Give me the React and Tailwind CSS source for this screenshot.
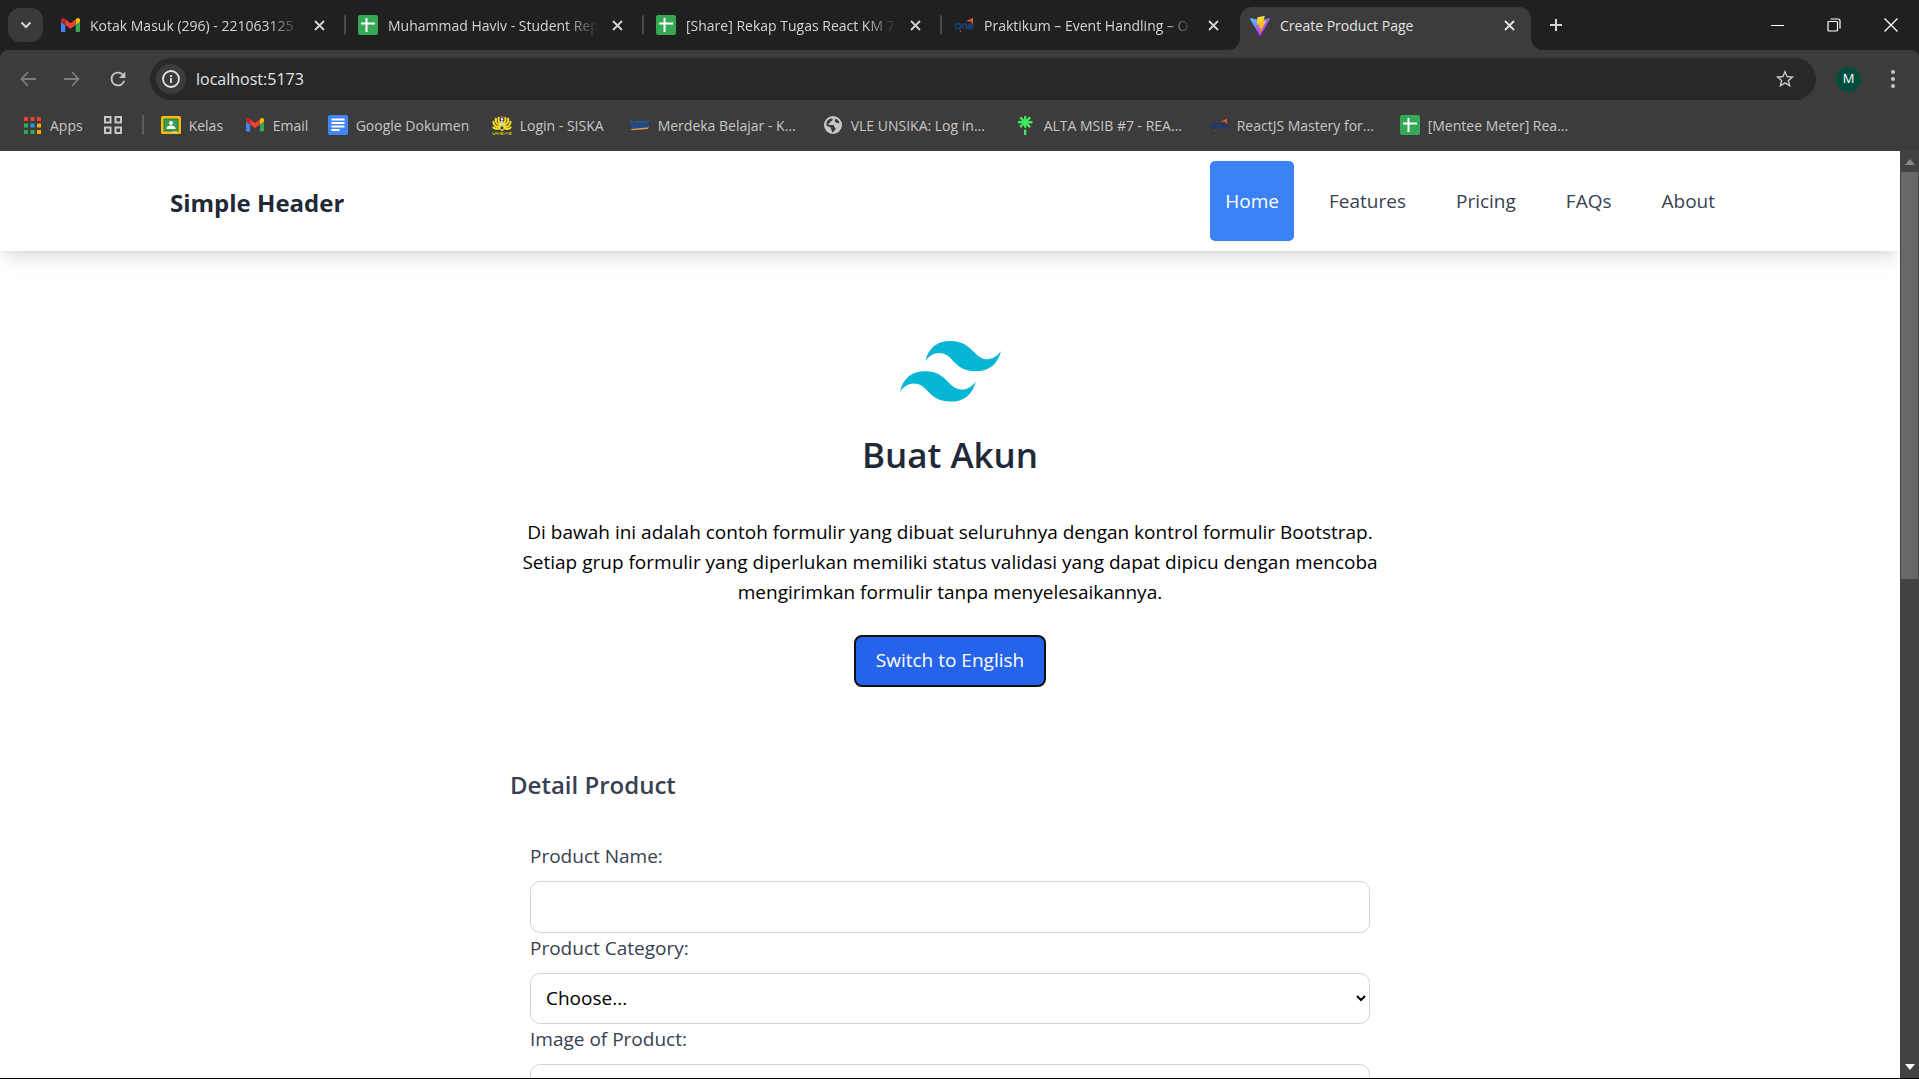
import React from "react";

/* ---------- icons ---------- */

const Gmail = ({ className }) => (
  <svg className={className} viewBox="52 42 88 66" aria-hidden="true">
    <path fill="#4285f4" d="M58 108h14V74L52 59v43c0 3.32 2.69 6 6 6" />
    <path fill="#34a853" d="M120 108h14c3.32 0 6-2.69 6-6V59l-20 15" />
    <path fill="#fbbc04" d="M120 48v26l20-15v-8c0-7.42-8.47-11.65-14.4-7.2" />
    <path fill="#ea4335" d="M72 74V48l24 18 24-18v26L96 92" />
    <path fill="#c5221f" d="M52 51v8l20 15V48l-5.600-4.200c-5.940-4.450-14.400-.22-14.400 7.200" />
  </svg>
);

const Sheets = ({ className }) => (
  <svg className={className} viewBox="0 0 20 20" aria-hidden="true">
    <rect width="20" height="20" rx="2" fill="#34a853" />
    <path d="M8.500 3v14M3 8.500h14" stroke="#fff" strokeWidth="2" />
  </svg>
);

const Docs = ({ className }) => (
  <svg className={className} viewBox="0 0 20 20" aria-hidden="true">
    <rect width="20" height="20" rx="2" fill="#4285f4" />
    <path d="M3.500 4.500h13M3.500 8h13M3.500 11.500h13M3.500 15h8" stroke="#fff" strokeWidth="1.800" />
  </svg>
);

const Classroom = ({ className }) => (
  <svg className={className} viewBox="0 0 20 18" aria-hidden="true">
    <rect width="20" height="18" rx="1.500" fill="#f9bb0c" />
    <rect x="2.500" y="2.500" width="15" height="13" fill="#188038" />
    <rect x="3.500" y="3.500" width="13" height="11" fill="#3f9c52" />
    <circle cx="10" cy="7" r="2" fill="#fff" />
    <path d="M5.500 13c0-2.500 2.500-3.400 4.500-3.400s4.500.9 4.500 3.400z" fill="#fff" />
    <path d="M11 15.500h5v1.200h-5z" fill="#e1e1e1" />
  </svg>
);

const One = ({ className }) => (
  <svg className={className} viewBox="0 0 20 20" aria-hidden="true">
    <g fill="none" stroke="#1c3a6e" strokeWidth="2">
      <circle cx="4" cy="11" r="2.600" />
      <path d="M8.500 14v-5.500M8.500 11c0-3 4-3 4 0v3M14.500 11.200h4.300c0-3-4.400-3-4.400.2 0 2.800 3.200 3 4.400 1.400" />
    </g>
    <path d="M12 6l7-3v6.500l-1.800-2.700z" fill="#f0562b" />
    <circle cx="6.500" cy="16" r=".9" fill="#b0451f" />
  </svg>
);

const Kampus = ({ className }) => (
  <svg className={className} viewBox="0 0 22 14" aria-hidden="true">
    <path
      d="M1 4.500V1.500M1 3l2-1.500M1.500 3l2 1.500M5 4.500V3M7 4.500V2.500l1.500 1 1.500-1v2M12 5V2.500h1.500V4M15.500 2v2h2V2M19.500 3.500V2h2"
      stroke="#1f5da8"
      strokeWidth="1.400"
      fill="none"
    />
    <path d="M1 5.500l20-.5v4L2 10.500z" fill="#1d4e92" />
    <path d="M4 7h2M8 7.500h3M13 6.500h2M17 7h2" stroke="#3c3c3c" strokeWidth="1" />
    <path d="M1 11l20-2-1.500 2L2 12.500z" fill="#e09a52" />
  </svg>
);

const Siska = ({ className }) => (
  <svg className={className} viewBox="0 0 21 21" aria-hidden="true">
    <g stroke="#f5dc1c" strokeWidth="2.200" strokeLinecap="round" fill="none">
      <path d="M8 12C4 12 1.500 9.500 1.500 6.500M8 10C5.500 9.500 3.500 7 4 3.500M8.500 8.500C7 7 6.500 5 7 2.500M13 12c4 0 6.500-2.500 6.500-5.500M13 10c2.500-.5 4.500-3 4-6.500M12.500 8.500C14 7 14.500 5 14 2.500M8 13.500c-3 1-5 .5-6.500-1M13 13.500c3 1 5 .5 6.500-1" />
    </g>
    <path d="M7 9h7l-1 6-2.500 1.500L8 15z" fill="#f5dc1c" />
    <path d="M9.300 1h2.400v4H9.300z" fill="#ececec" />
    <path d="M9.300 1h2.400v1.800H9.300z" fill="#d4322b" />
    <path d="M9.200 5.500h2.600V10H9.200z" fill="#d9cfe8" />
    <circle cx="10.500" cy="13" r="1.600" fill="#1f3a9c" />
    <path
      d="M1 17.500v2.300h2.500v-2.300M5 20v-2.300l2.200 2.300v-2.300M11 17.800H9v1h2V20H9M12.500 17.500V20M14 20l1.300-2.300L16.600 20M18 17.800h2v2.100h-2z"
      stroke="#c9c21e"
      strokeWidth=".9"
      fill="none"
    />
  </svg>
);

const Globe = ({ className }) => (
  <svg className={className} viewBox="0 0 20 20" aria-hidden="true">
    <circle cx="10" cy="10" r="9" fill="#c4c7cc" />
    <path
      d="M8.500 3.500c2 .2 1.500 1.800 0 2.500-1.500.6-1 2-2.500 2.300-1.300.3-.7 1.700.8 1.700h3c1.600 0 1.700 1.500 1.700 2.500 1.500 0 1.500 1.600.5 2.500-1 1-1.500 2.500-3 2.500.5-2-1-2-1-4 0-1.500-2.500-1.500-4.500-3C3 7 5 3.800 8.500 3.500zM12.500 3.500c2 .8 3.500 2.500 4 4.500-1.500.8-3-.5-4.500-1-1-.5.5-2 .5-3.500z"
      fill="#3c3c3c"
    />
  </svg>
);

const Asterisk = ({ className }) => (
  <svg className={className} viewBox="0 0 18 22" aria-hidden="true">
    <path
      d="M9 1v13M1 8h16M3.500 2.600l11 10.800M14.500 2.600l-11 10.800M9 16v6"
      stroke="#43e660"
      strokeWidth="2.600"
      fill="none"
    />
  </svg>
);

const Vite = ({ className }) => (
  <svg className={className} viewBox="0 0 256 257" aria-hidden="true">
    <defs>
      <linearGradient id="viteBody" x1="-.828%" x2="57.636%" y1="7.652%" y2="78.411%">
        <stop offset="0%" stopColor="#41D1FF" />
        <stop offset="100%" stopColor="#BD34FE" />
      </linearGradient>
      <linearGradient id="viteBolt" x1="43.376%" x2="50.316%" y1="2.242%" y2="89.030%">
        <stop offset="0%" stopColor="#FFEA83" />
        <stop offset="8.333%" stopColor="#FFDD35" />
        <stop offset="100%" stopColor="#FFA800" />
      </linearGradient>
    </defs>
    <path
      fill="url(#viteBody)"
      d="M255.153 37.938L134.897 252.976c-2.483 4.440-8.862 4.466-11.382.048L.875 37.958c-2.746-4.814 1.371-10.646 6.827-9.670l120.385 21.517a6.537 6.537 0 0 0 2.322-.004l117.867-21.483c5.438-.991 9.574 4.796 6.877 9.620Z"
    />
    <path
      fill="url(#viteBolt)"
      d="M185.432.063L96.440 17.501a3.268 3.268 0 0 0-2.634 3.014l-5.474 92.456a3.268 3.268 0 0 0 3.997 3.378l24.777-5.718c2.318-.535 4.413 1.507 3.936 3.838l-7.361 36.047c-.495 2.426 1.782 4.500 4.151 3.780l15.304-4.649c2.372-.72 4.652 1.360 4.150 3.788l-11.698 56.621c-.732 3.542 3.979 5.473 5.943 2.437l1.313-2.028l72.516-144.720c1.215-2.423-.88-5.186-3.540-4.672l-25.505 4.922c-2.396.462-4.435-1.770-3.759-4.114l16.646-57.705c.677-2.350-1.370-4.583-3.769-4.113Z"
    />
  </svg>
);

const AppsGrid = ({ className }) => (
  <svg className={className} viewBox="0 0 17 17" aria-hidden="true">
    <path d="M0 0h4v4H0zM6.500 0h4v4h-4zM13 0h4v4h-4z" fill="#ea4335" />
    <path d="M0 6.500h4v4H0zM0 13h4v4H0zM6.500 13h4v4h-4z" fill="#34a853" />
    <path d="M6.500 6.500h4v4h-4z" fill="#2196f3" />
    <path d="M13 6.500h4v4h-4zM13 13h4v4h-4z" fill="#fbaa05" />
  </svg>
);

const TabGroups = ({ className }) => (
  <svg className={className} viewBox="0 0 18 18" aria-hidden="true">
    <path
      d="M1 1h5.500v5.500H1zM11.500 1H17v5.500h-5.500zM1 11.500h5.500V17H1zM11.500 11.500H17V17h-5.500z"
      fill="none"
      stroke="#c7c7c7"
      strokeWidth="2"
    />
  </svg>
);

const Line = ({ className, d, width = 2, box = "0 0 20 20" }) => (
  <svg className={className} viewBox={box} fill="none" stroke="currentColor" strokeWidth={width} aria-hidden="true">
    <path d={d} />
  </svg>
);

const Reload = ({ className }) => (
  <svg className={className} viewBox="0 0 24 24" fill="currentColor" aria-hidden="true">
    <path d="M17.650 6.350A7.958 7.958 0 0 0 12 4a8 8 0 1 0 7.730 10h-2.080A6 6 0 1 1 12 6c1.660 0 3.140.69 4.220 1.780L13 11h7V4z" />
  </svg>
);

const Star = ({ className }) => (
  <svg className={className} viewBox="0 0 24 24" fill="currentColor" aria-hidden="true">
    <path d="M22 9.240l-7.190-.62L12 2 9.190 8.630 2 9.240l5.460 4.730L5.820 21 12 17.270 18.180 21l-1.630-7.030zM12 15.400l-3.760 2.270 1-4.280-3.320-2.880 4.380-.38L12 6.100l1.710 4.040 4.380.38-3.320 2.880 1 4.280z" />
  </svg>
);

const TailwindMark = ({ className }) => (
  <svg className={className} viewBox="0 0 54 33" aria-hidden="true">
    <path
      fill="#06b6d4"
      fillRule="evenodd"
      clipRule="evenodd"
      d="M27 0c-7.200 0-11.700 3.600-13.500 10.800 2.700-3.600 5.850-4.950 9.450-4.050 2.054.513 3.522 2.004 5.147 3.653C30.744 13.090 33.808 16.200 40.500 16.200c7.200 0 11.700-3.600 13.500-10.800-2.700 3.600-5.850 4.950-9.450 4.050-2.054-.513-3.522-2.004-5.147-3.653C36.756 3.110 33.692 0 27 0zM13.500 16.200C6.300 16.200 1.800 19.800 0 27c2.700-3.600 5.850-4.950 9.450-4.050 2.054.514 3.522 2.004 5.147 3.653C17.244 29.290 20.308 32.400 27 32.400c7.200 0 11.700-3.600 13.500-10.800-2.700 3.600-5.850 4.950-9.450 4.050-2.054-.513-3.522-2.004-5.147-3.653C23.256 19.310 20.192 16.200 13.500 16.200z"
    />
  </svg>
);

/* ---------- browser chrome ---------- */

const CROSS = "M1 1l9 9M10 1l-9 9";

const tabs = [
  { title: "Kotak Masuk (296) - 221063125", icon: <Gmail className="w-[19px]" /> },
  { title: "Muhammad Haviv - Student Rep", icon: <Sheets className="size-5" /> },
  { title: "[Share] Rekap Tugas React KM 7", icon: <Sheets className="size-5" /> },
  { title: "Praktikum – Event Handling – O", icon: <One className="size-5" /> },
];

function Tab({ title, icon, last }) {
  return (
    <div className="flex min-w-0 flex-1 items-center">
      <div className="flex min-w-0 flex-1 items-center gap-2.5 pl-3">
        <span className="flex w-5 shrink-0 justify-center">{icon}</span>
        <span className="min-w-0 flex-1 overflow-hidden whitespace-nowrap [mask-image:linear-gradient(to_right,black_85%,transparent)]">
          {title}
        </span>
        <button aria-label={"Close " + title} className="mr-[15px] p-1">
          <Line className="size-[11px]" box="0 0 11 11" width={1.8} d={CROSS} />
        </button>
      </div>
      <span className={last ? "w-0.5" : "h-5 w-0.5 rounded bg-[#47494a]"} />
    </div>
  );
}

function TabStrip() {
  return (
    <div className="flex h-[50px] items-center bg-[#1f2120] text-[14px] text-[#d3d5d4]">
      <button
        aria-label="Search tabs"
        className="ml-2 mr-1 flex h-[34px] w-[35px] shrink-0 items-center justify-center rounded-xl bg-[#3a3a3a]"
      >
        <Line className="size-3" box="0 0 12 12" d="M1.500 3.500L6 8l4.500-4.500" />
      </button>
      <div className="ml-px flex max-w-[1192px] flex-1">
        {tabs.map((tab, i) => (
          <Tab key={tab.title} {...tab} last={i === 3} />
        ))}
      </div>
      <div className="relative flex h-full w-[291px] items-end text-[#3c3c3c]">
        <svg className="absolute -left-3 bottom-0 size-3" viewBox="0 0 12 12" fill="currentColor" aria-hidden="true">
          <path d="M12 0v12H0A12 12 0 0 0 12 0z" />
        </svg>
        <div className="flex h-[43px] w-full items-center gap-2.5 rounded-t-xl bg-[#3c3c3c] pb-1.5 pl-2.5 text-[#e3e3e3]">
          <Vite className="size-5" />
          <span className="flex-1">Create Product Page</span>
          <button aria-label="Close Create Product Page" className="mr-3 p-1">
            <Line className="size-[11px]" box="0 0 11 11" width={1.8} d={CROSS} />
          </button>
        </div>
        <svg className="absolute -right-3 bottom-0 size-3" viewBox="0 0 12 12" fill="currentColor" aria-hidden="true">
          <path d="M0 0v12h12A12 12 0 0 1 0 0z" />
        </svg>
      </div>
      <button aria-label="New tab" className="ml-3.5 p-1">
        <Line className="size-[14px]" box="0 0 14 14" width={2} d="M7 1v12M1 7h12" />
      </button>
      <div className="ml-auto flex items-center gap-[43px] pr-[21px] text-white">
        <button aria-label="Minimize">
          <Line className="size-[14px]" box="0 0 14 14" width={1} d="M1 7.500h13" />
        </button>
        <button aria-label="Restore">
          <Line
            className="size-[14px]"
            box="0 0 14 14"
            width={1.2}
            d="M1 4.500a1 1 0 0 1 1-1h7.500a1 1 0 0 1 1 1V12a1 1 0 0 1-1 1H2a1 1 0 0 1-1-1zM3.500 1H11a2 2 0 0 1 2 2v7.500"
          />
        </button>
        <button aria-label="Close window">
          <Line className="size-[14px]" box="0 0 14 14" width={1.3} d="M.5.5l13 13M13.500.5l-13 13" />
        </button>
      </div>
    </div>
  );
}

function Toolbar() {
  return (
    <div className="flex items-center pb-1.5 pt-2 text-[#c7c7c7]">
      <button aria-label="Back" className="ml-5 text-[#7d7d7d]">
        <Line className="size-4" box="0 0 16 16" width={1.8} d="M16 8H1.500M8 1L1.500 8 8 15" />
      </button>
      <button aria-label="Forward" className="ml-7 text-[#7d7d7d]">
        <Line className="size-4" box="0 0 16 16" width={1.8} d="M0 8h14.500M8 1l6.500 7L8 15" />
      </button>
      <button aria-label="Reload" className="ml-[27px]">
        <Reload className="size-[22px]" />
      </button>
      <div className="ml-[21px] flex h-[42px] flex-1 items-center rounded-full bg-[#282828] pl-1.5 pr-5">
        <button
          aria-label="Site information"
          className="flex size-[30px] shrink-0 items-center justify-center rounded-full bg-[#3c3c3c] text-[#e3e3e3]"
        >
          <Line
            className="size-[18px]"
            box="0 0 18 18"
            width={1.8}
            d="M9 1a8 8 0 1 0 0 16A8 8 0 0 0 9 1zM9 8v5M9 5v2"
          />
        </button>
        <label className="relative ml-2.5 flex-1">
          <span className="sr-only">Address</span>
          <input
            defaultValue="localhost:5173"
            className="w-full bg-transparent text-[16px] text-[#e3e3e3] outline-none"
          />
        </label>
        <button aria-label="Bookmark this page">
          <Star className="size-[22px]" />
        </button>
      </div>
      <button
        aria-label="Profile"
        className="ml-5 flex size-[25px] items-center justify-center rounded-full bg-[#004d40] text-[13px] text-white"
      >
        M
      </button>
      <button aria-label="Menu" className="ml-[22px] mr-4">
        <svg className="size-5" viewBox="0 0 20 20" fill="currentColor" aria-hidden="true">
          <circle cx="10" cy="3" r="2" />
          <circle cx="10" cy="10" r="2" />
          <circle cx="10" cy="17" r="2" />
        </svg>
      </button>
    </div>
  );
}

const bookmarks = [
  { label: "Kelas", width: "w-[84px]", icon: <Classroom className="w-5" /> },
  { label: "Email", width: "w-[83px]", icon: <Gmail className="w-[18px]" /> },
  { label: "Google Dokumen", width: "w-[164px]", icon: <Docs className="size-5" /> },
  { label: "Login - SISKA", width: "w-[138px]", icon: <Siska className="size-[21px]" /> },
  { label: "Merdeka Belajar - K...", width: "w-[193px]", icon: <Kampus className="w-[22px]" /> },
  { label: "VLE UNSIKA: Log in...", width: "w-[193px]", icon: <Globe className="size-5" /> },
  { label: "ALTA MSIB #7 - REA...", width: "w-[193px]", icon: <Asterisk className="h-5" /> },
  { label: "ReactJS Mastery for...", width: "w-[191px]", icon: <One className="size-[18px]" /> },
  { label: "[Mentee Meter] Rea...", width: "w-[190px]", icon: <Sheets className="size-5" /> },
];

function Bookmarks() {
  return (
    <nav aria-label="Bookmarks" className="flex h-[45px] items-center pb-[7px] text-[14px] text-[#c7c7c7]">
      <a href="#apps" className="ml-6 flex items-center gap-[9px]">
        <AppsGrid className="size-[17px]" />
        Apps
      </a>
      <button aria-label="Tab groups" className="ml-[21px]">
        <TabGroups className="size-[18px]" />
      </button>
      <span className="ml-5 mr-[17px] h-5 w-0.5 bg-[#5c5c5c]" />
      {bookmarks.map(({ label, width, icon }) => (
        <a key={label} href={"#" + label} className={"flex shrink-0 items-center gap-2 whitespace-nowrap " + width}>
          <span className="flex w-5 shrink-0 justify-center">{icon}</span>
          {label}
        </a>
      ))}
    </nav>
  );
}

function Scrollbar() {
  return (
    <div className="flex w-[19px] shrink-0 flex-col items-center bg-[#424242]" aria-hidden="true">
      <svg className="mt-2 w-2.5" viewBox="0 0 10 6">
        <path d="M5 0l5 6H0z" fill="#868686" />
      </svg>
      <span className="mt-[7px] h-[407px] w-[17px] bg-[#686868]" />
      <svg className="mb-2 mt-auto w-2.5" viewBox="0 0 10 6">
        <path d="M5 6l5-6H0z" fill="#fff" />
      </svg>
    </div>
  );
}

/* ---------- page ---------- */

const links = ["Home", "Features", "Pricing", "FAQs", "About"];

function Header() {
  return (
    <header className="bg-white px-5 py-2.5 shadow-[0_12px_19px_-4px_rgba(0,0,0,0.1),0_5px_8px_-5px_rgba(0,0,0,0.1)]">
      <div className="mx-auto flex max-w-[1560px] items-center justify-between">
        <a href="#home" className="pt-1 text-[24px] font-bold text-[#1f2937]">
          Simple Header
        </a>
        <nav className="flex gap-5 text-[19px]">
          {links.map((link, i) => (
            <a
              key={link}
              href={"#" + link}
              className={
                i === 0
                  ? "flex h-20 items-center rounded-[5px] bg-[#3b82f6] px-[15px] text-white"
                  : "flex h-20 items-center px-[15px] text-[#374151]"
              }
            >
              {link}
            </a>
          ))}
        </nav>
      </div>
    </header>
  );
}

const field = "mt-2.5 block w-full rounded-[10px] border border-[#d1d5db] bg-white text-[19px] text-black";

function ProductForm() {
  return (
    <form className="mt-20">
      <h2 className="text-[24px] font-semibold leading-9 text-[#374151]">Detail Product</h2>
      <div className="mt-[38px] px-5 text-[19px] leading-[30px] text-[#374151]">
        <label htmlFor="name" className="block">
          Product Name:
        </label>
        <input id="name" type="text" className={field + " h-[52px] px-[15px]"} />
        <label htmlFor="category" className="block">
          Product Category:
        </label>
        <select id="category" className={field + " h-[51px] px-[11px]"}>
          <option>Choose...</option>
        </select>
        <label htmlFor="image" className="block">
          Image of Product:
        </label>
        <input id="image" type="text" className={field + " h-[52px] px-[15px]"} />
      </div>
    </form>
  );
}

export default function App() {
  return (
    <div className="flex h-screen flex-col overflow-hidden border-b border-black bg-[#1f2120] font-['Open_Sans',sans-serif]">
      <TabStrip />
      <div className="rounded-t-lg bg-[#3c3c3c]">
        <Toolbar />
        <Bookmarks />
      </div>
      <div className="flex min-h-0 flex-1">
        <div className="min-w-0 flex-1 overflow-hidden bg-white">
          <Header />
          <main className="mx-auto max-w-[880px] pt-[90px]">
            <section className="flex flex-col items-center text-center">
              <TailwindMark className="w-[101px]" />
              <h1 className="mt-[29px] text-[35px] font-semibold leading-[45px] text-[#1f2937]">Buat Akun</h1>
              <p className="mt-10 px-2 text-[19px] leading-[30px] text-black">
                Di bawah ini adalah contoh formulir yang dibuat seluruhnya dengan kontrol formulir Bootstrap. Setiap
                grup formulir yang diperlukan memiliki status validasi yang dapat dipicu dengan mencoba mengirimkan
                formulir tanpa menyelesaikannya.
              </p>
              <button className="mt-7 h-[52px] rounded-lg border-2 border-[#101010] bg-[#2563eb] px-5 text-[19px] text-white">
                Switch to English
              </button>
            </section>
            <ProductForm />
          </main>
        </div>
        <Scrollbar />
      </div>
    </div>
  );
}
